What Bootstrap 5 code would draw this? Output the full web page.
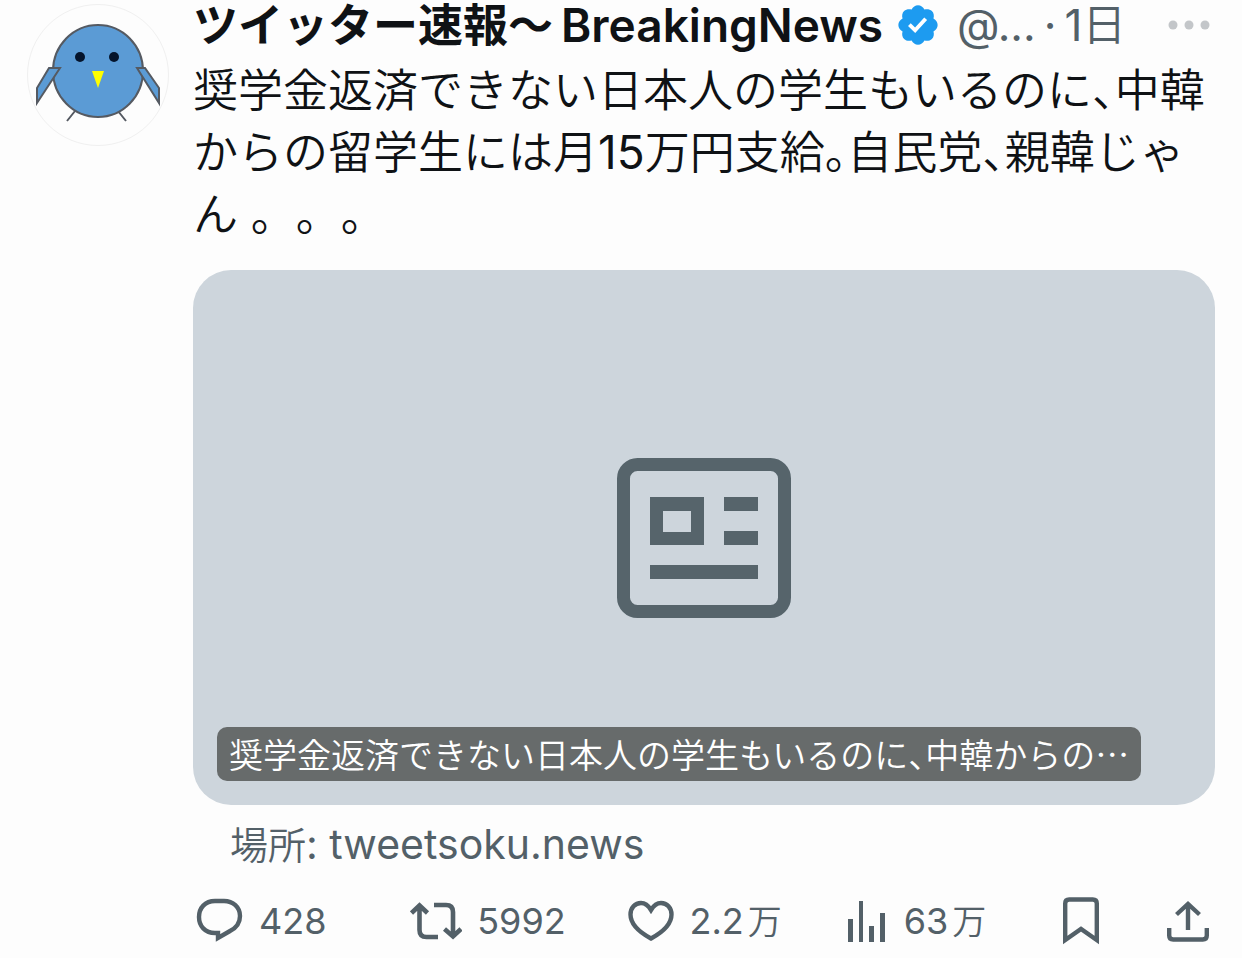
<!DOCTYPE html>
<html lang="ja">
<head>
<meta charset="utf-8">
<meta name="viewport" content="width=device-width, initial-scale=1">
<title>ツイッター速報〜BreakingNews</title>
<link href="https://cdn.jsdelivr.net/npm/bootstrap@5.3.0/dist/css/bootstrap.min.css" rel="stylesheet">
<style>
  :root { --ink: #0f1215; --muted: #536068; }
  body { background: #fdfdfd; color: var(--ink); font-family: Inter, "Noto Sans CJK JP", sans-serif; }
  svg { display: block; flex: none; }
  .post { padding: 0 27px; gap: 24px; }
  .avatar { width: 142px; height: 142px; margin-top: 4px; border: 1px solid #f0f0f0; overflow: hidden; }
  .post-head { height: 50px; font-size: 44px; line-height: 50px; }
  .display-name { font-size: 45px; font-weight: 600; color: var(--ink); }
  .latin-name { font-size: 46px; }
  .verified { margin: 0 16px 0 12px; }
  .meta { color: var(--muted); gap: 8px; }
  .unit { font-family: "Noto Sans CJK JP", sans-serif; font-weight: 350; line-height: 1; }
  .post-text { font-size: 45px; font-weight: 350; line-height: 62px; margin: 10px 0 24px; text-spacing-trim: space-all; font-feature-settings: "chws" 0; }
  .half { font-feature-settings: "halt"; }
  .digits { font-size: 46px; font-weight: 400; line-height: 1; }
  .preview { background: #cdd5dc; height: 535px; border-radius: 38px; color: #56646b; }
  .preview-title { left: 24px; bottom: 24px; padding: 0 12px; border-radius: 10px; background: #676b6b; color: #fff; font-family: "Noto Sans CJK JP", sans-serif; font-weight: 350; font-size: 34px; line-height: 54px; }
  .source { padding: 0 37px; margin-top: 12px; font-size: 41px; line-height: 54px; color: var(--muted); }
  .source .unit { font-size: 38px; }
  .actions { display: grid; grid-template-columns: 214fr 218fr 218fr 216fr 104px 48px; padding-left: 3px; margin-top: 24px; height: 52px; align-items: center; }
  .act { padding: 0; border: 0; background: none; color: var(--muted); font-size: 36px; line-height: 52px; display: flex; align-items: center; gap: 15px; text-align: left; white-space: nowrap; }
  .act .unit { font-size: 34px; margin-left: 4px; }
</style>
</head>
<body>
<article class="post d-flex align-items-start">
  <a href="#" class="avatar rounded-circle flex-shrink-0" aria-label="プロフィール">
    <svg width="142" height="142" viewBox="28 5 142 142">
      <g stroke="#555a62" stroke-width="2">
        <path d="M75 111L67 121M118 111l8 10" fill="none"/>
        <ellipse cx="98" cy="71" rx="45" ry="46" fill="#5b9bd5"/>
        <path d="M49 68h11L37 103V88zM137 68h8l14 20v15z" fill="#5b9bd5"/>
      </g>
      <circle cx="80" cy="57" r="5" fill="#04142c"/>
      <circle cx="114" cy="57" r="5" fill="#04142c"/>
      <path d="M92 71h12l-6 17z" fill="#ff0"/>
    </svg>
  </a>
  <div class="flex-grow-1">
    <header class="post-head d-flex align-items-center text-nowrap">
      <a href="#" class="display-name text-decoration-none">ツイッター速報〜<span class="latin-name ms-2">BreakingNews</span></a>
      <svg class="verified" width="46" height="46" viewBox="0 0 24 24" aria-label="認証済み"><path fill="#1d9bf0" d="M22.25 12c0-1.43-.88-2.67-2.19-3.34.46-1.39.2-2.9-.81-3.91s-2.52-1.27-3.91-.81c-.66-1.31-1.91-2.19-3.34-2.19s-2.67.88-3.33 2.19c-1.4-.46-2.91-.2-3.92.81s-1.26 2.52-.8 3.91c-1.31.67-2.2 1.91-2.2 3.34s.89 2.67 2.2 3.34c-.46 1.39-.21 2.9.8 3.91s2.52 1.26 3.91.81c.67 1.31 1.91 2.19 3.34 2.19s2.68-.88 3.34-2.19c1.39.45 2.9.2 3.91-.81s1.27-2.52.81-3.91c1.31-.67 2.19-1.91 2.19-3.34z"/><path fill="#fff" d="M10.54 16.2L6.8 12.46l1.41-1.42 2.26 2.26 4.8-5.23 1.47 1.36z"/></svg>
      <span class="meta d-flex"><span>@...</span><span>·</span><span>1<span class="unit">日</span></span></span>
      <button type="button" class="act ms-auto me-1" aria-label="その他"><svg width="44" height="12" viewBox="0 0 44 12" fill="#c3c6c9"><circle cx="6" cy="6" r="4.500"/><circle cx="22" cy="6" r="4.500"/><circle cx="38" cy="6" r="4.500"/></svg></button>
    </header>
    <p class="post-text">奨学金返済できない日本人の学生もいるのに<span class="half">、</span>中韓<br>からの留学生には月<span class="digits">15</span>万円支給<span class="half">。</span>自民党<span class="half">、</span>親韓じゃ<br>ん 。。。</p>
    <a href="#" class="preview position-relative d-flex align-items-center justify-content-center text-decoration-none">
      <svg width="174" height="160" viewBox="0 0 174 160" fill="currentColor"><rect x="6.5" y="6.5" width="161" height="147" rx="14" fill="none" stroke="currentColor" stroke-width="13"/><path fill-rule="evenodd" d="M33 39h54v48H33zM46 53v21h28V53z"/><path d="M107 39h34v14h-34zM107 73h34v14h-34zM33 107h108v14H33z"/></svg>
      <span class="preview-title position-absolute text-nowrap">奨学金返済できない日本人の学生もいるのに<span class="half">、</span>中韓からの…</span>
    </a>
    <div class="source"><span class="unit">場所</span>: tweetsoku.news</div>
    <div class="actions">
      <button type="button" class="act" aria-label="返信 428"><svg width="48" height="46" viewBox="0 0 48 46" fill="none" stroke="currentColor" stroke-width="4.4"><path d="M19 3h9c9 0 16 6 16 15 0 7-4 12-10 15L22 40v-5h-3C9 35 3 28 3 19S9 3 19 3z"/></svg>428</button>
      <button type="button" class="act" aria-label="リポスト 5992"><svg width="52" height="40" viewBox="0 0 52 40" fill="none" stroke="currentColor" stroke-width="4.6"><path d="M1.500 12L9.500 4.500l8 7.500M9.500 5v24q0 7 7 7H28M24 4h12q7 0 7 7v24M34.500 28l8.500 7.500 8-7.500"/></svg>5992</button>
      <button type="button" class="act" aria-label="いいね 2.2万"><svg width="46" height="42" viewBox="0 0 46 42" fill="none" stroke="currentColor" stroke-width="4.4"><path d="M23 10C20 5 16.500 3 13 3 7 3 2.500 8 2.500 14.500 2.500 24 11 32 23 38.500 35 32 43.500 24 43.500 14.500 43.500 8 39 3 33 3c-3.500 0-7 2-10 7z"/></svg><span>2.2<span class="unit">万</span></span></button>
      <button type="button" class="act" aria-label="表示 63万"><svg width="42" height="42" viewBox="0 0 42 42" fill="currentColor"><path d="M1 19h5v23H1zM12 1h4v41h-4zM22 26h5v16h-5zM33 13h5v29h-5z"/></svg><span>63<span class="unit">万</span></span></button>
      <button type="button" class="act" aria-label="ブックマーク"><svg width="36" height="48" viewBox="0 0 36 48" fill="none" stroke="currentColor" stroke-width="4.4"><path d="M2.200 43V6.500q0-4 4-4h23.600q4 0 4 4V43L18 32z"/></svg></button>
      <button type="button" class="act" aria-label="共有"><svg width="42" height="42" viewBox="0 0 42 42" fill="none" stroke="currentColor" stroke-width="4.400"><path d="M2.200 28v7.500q0 4 4 4h29.600q4 0 4-4V28M21 30V4M9.500 14.500L21 4l11.500 10.500"/></svg></button>
    </div>
  </div>
</article>
<script src="https://cdn.jsdelivr.net/npm/bootstrap@5.3.0/dist/js/bootstrap.bundle.min.js"></script>
</body>
</html>
